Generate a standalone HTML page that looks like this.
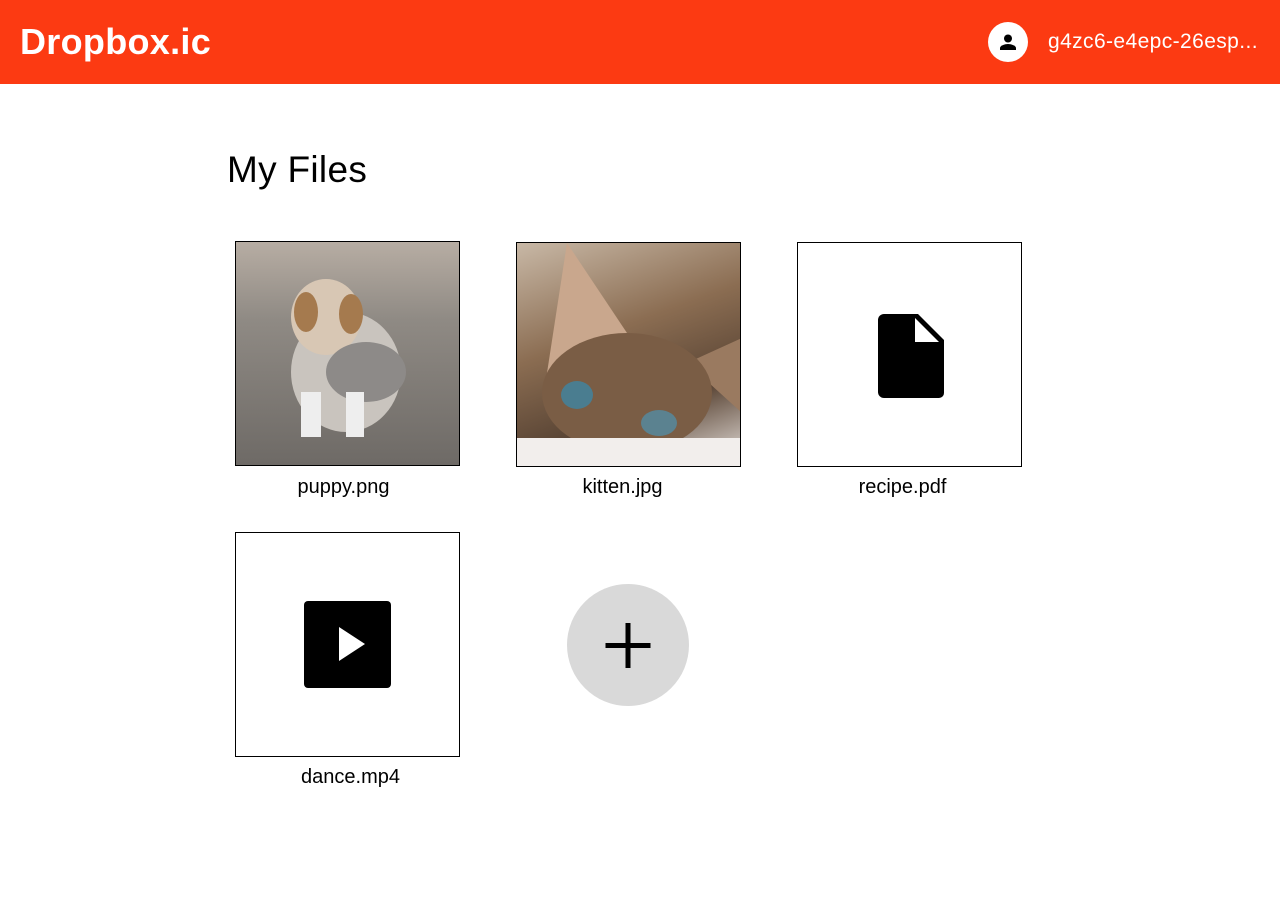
<!DOCTYPE html>
<html><head><meta charset="utf-8"><style>
*{margin:0;padding:0;box-sizing:border-box}
body{width:1280px;height:916px;background:#fff;font-family:"Liberation Sans",sans-serif;position:relative;overflow:hidden}
.hdr{position:absolute;left:0;top:0;width:1280px;height:84px;background:#fc3a12}
.logo{position:absolute;left:20px;top:21px;color:#fff;font-weight:bold;font-size:36px;letter-spacing:0.3px}
.av{position:absolute;left:988px;top:22px;width:40px;height:40px;border-radius:50%;background:#fff}
.user{position:absolute;left:1048px;top:30px;color:#fff;font-size:21px;letter-spacing:0.4px}
h1{position:absolute;left:227px;top:149px;font-weight:normal;font-size:37px;color:#000;letter-spacing:0.3px}
.card{position:absolute;width:225px;height:225px;border:1px solid #000;overflow:hidden}
.lbl{position:absolute;width:225px;text-align:center;font-size:20px;color:#000}
.plus{position:absolute;left:567px;top:584px;width:122px;height:122px;border-radius:50%;background:#d9d9d9}
</style></head><body>
<div class="hdr">
<div class="logo">Dropbox.ic</div>
<div class="av"><svg width="40" height="40" viewBox="0 0 40 40"><circle cx="20" cy="16.5" r="4" fill="#000"/><path d="M12 28v-2c0-2.5 5-4 8-4s8 1.5 8 4v2z" fill="#000"/></svg></div>
<div class="user">g4zc6-e4epc-26esp...</div>
</div>
<h1>My Files</h1>

<div class="card" style="left:235px;top:241px;background:linear-gradient(180deg,#b7ada3 0%,#8f8a84 35%,#6e6a66 100%)">
<svg width="225" height="225"><ellipse cx="110" cy="130" rx="55" ry="60" fill="#c9c4be"/><ellipse cx="90" cy="75" rx="35" ry="38" fill="#d8c7b4"/><ellipse cx="130" cy="130" rx="40" ry="30" fill="#8d8a88"/><rect x="65" y="150" width="20" height="45" fill="#eee"/><rect x="110" y="150" width="18" height="45" fill="#eee"/><ellipse cx="70" cy="70" rx="12" ry="20" fill="#a57a4e"/><ellipse cx="115" cy="72" rx="12" ry="20" fill="#a57a4e"/></svg>
</div>
<div class="lbl" style="left:231px;top:476px">puppy.png</div>

<div class="card" style="left:516px;top:242px;background:linear-gradient(160deg,#c8b8a6 0%,#8b6d52 40%,#5a4535 70%,#e8e2de 100%)">
<svg width="225" height="225"><polygon points="30,130 50,0 110,90" fill="#c9a78d"/><polygon points="170,120 225,95 225,170" fill="#9a7a60"/><ellipse cx="110" cy="150" rx="85" ry="60" fill="#7a5d45"/><ellipse cx="60" cy="152" rx="16" ry="14" fill="#4a7d90"/><ellipse cx="142" cy="180" rx="18" ry="13" fill="#5b8290"/><rect x="0" y="195" width="225" height="30" fill="#f2eeec"/></svg>
</div>
<div class="lbl" style="left:510px;top:476px">kitten.jpg</div>

<div class="card" style="left:797px;top:242px">
<svg width="225" height="225" viewBox="0 0 225 225"><path d="M86 71h34l26 26v53a5 5 0 0 1-5 5h-55a6 6 0 0 1-6-6v-72a6 6 0 0 1 6-6z" fill="#000"/><path d="M117 75v24h24z" fill="#fff"/></svg>
</div>
<div class="lbl" style="left:790px;top:476px">recipe.pdf</div>

<div class="card" style="left:235px;top:532px">
<svg width="225" height="225" viewBox="0 0 225 225"><rect x="68" y="68" width="87" height="87" rx="4" fill="#000"/><path d="M103 94v34l26-17z" fill="#fff"/></svg>
</div>
<div class="lbl" style="left:238px;top:766px">dance.mp4</div>

<div class="plus"><svg width="122" height="122" viewBox="0 0 122 122"><path d="M58.5 39h5v20h20v5h-20v20h-5v-20h-20v-5h20z" fill="#000"/></svg></div>
</body></html>
